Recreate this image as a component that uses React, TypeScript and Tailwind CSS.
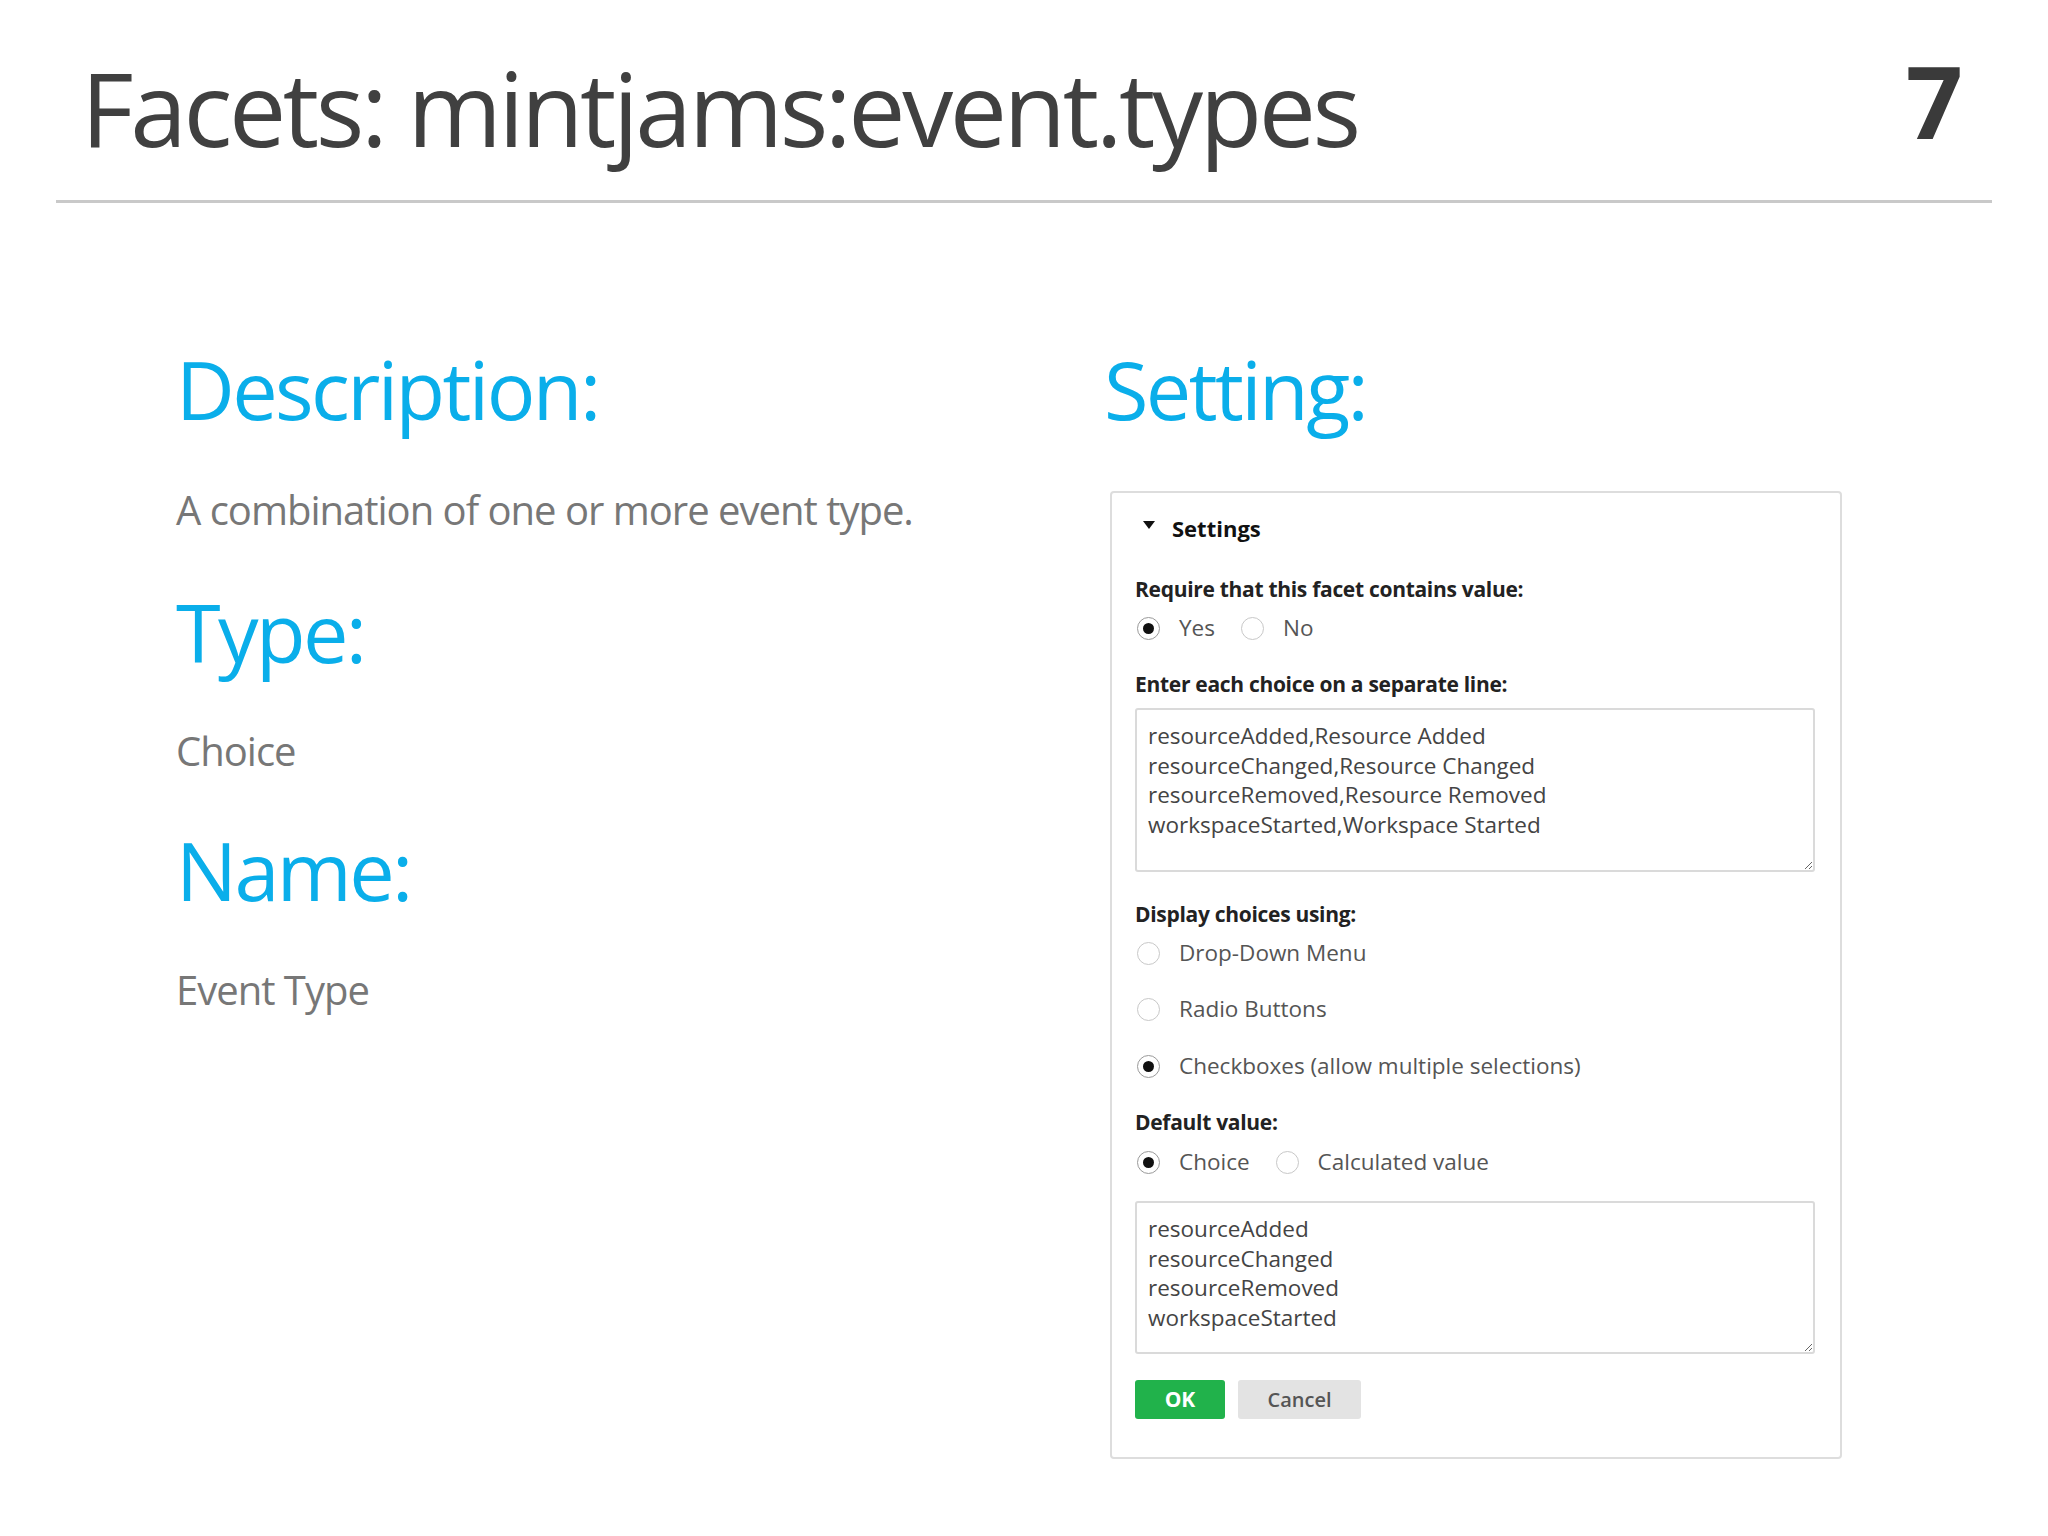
import React from "react";

const font = { fontFamily: '"Open Sans", "Noto Sans", sans-serif' };

function Radio({ checked }: { checked?: boolean }) {
    return (
        <span
            className={
                "flex h-[23px] w-[23px] shrink-0 items-center justify-center rounded-full border-[1.5px] bg-white " +
                (checked ? "border-[#9a9a9a]" : "border-[#c8c8c8]")
            }
        >
            {checked && <span className="h-[11px] w-[11px] rounded-full bg-[#111]" />}
        </span>
    );
}

function Option({ label, checked, className = "" }: { label: string; checked?: boolean; className?: string }) {
    return (
        <div className={"flex h-[36px] items-center " + className}>
            <Radio checked={checked} />
            <span className="ml-[19px] text-[22.5px] text-[#555]">{label}</span>
        </div>
    );
}

function Label({ text, className = "" }: { text: string; className?: string }) {
    return (
        <div className={"flex h-[36px] items-center text-[21px] font-bold text-[#222] tracking-[-0.3px] " + className}>
            {text}
        </div>
    );
}

function Box({ lines, height, className = "" }: { lines: string[]; height: number; className?: string }) {
    return (
        <textarea
            readOnly
            defaultValue={lines.join("\n")}
            style={{ height }}
            className={
                "block w-[680px] rounded-[3px] border-2 border-[#dadada] bg-white pl-[11px] pt-[11px] text-[22.5px] leading-[29.5px] text-[#444] outline-none " +
                className
            }
        />
    );
}

export default function App() {
    return (
        <div className="h-[1536px] w-[2048px] overflow-hidden bg-white" style={font}>
            <div className="mx-[56px] flex items-start justify-between border-b-[3px] border-[#c9c9c9] pb-[41px] pl-[25px] pr-[29px] pt-[50px]">
                <h1 className="mt-[7px] text-[102px] leading-none tracking-[-3.4px] text-[#404040]">Facets: mintjams:event.types</h1>
                <span className="text-[100px] font-bold leading-none text-[#3a3a3a]">7</span>
            </div>

            <div className="flex pl-[176px] pt-[145px]">
                <div className="w-[928px]">
                    <h2 className="text-[81px] leading-none tracking-[-2.6px] text-[#0aaeea]">Description:</h2>
                    <p className="mt-[61px] text-[40px] leading-none tracking-[-1px] text-[#777]">A combination of one or more event type.</p>
                    <h2 className="mt-[61px] text-[81px] leading-none tracking-[-2.6px] text-[#0aaeea]">Type:</h2>
                    <p className="mt-[59px] text-[40px] leading-none tracking-[-1px] text-[#777]">Choice</p>
                    <h2 className="mt-[58px] text-[81px] leading-none tracking-[-2.6px] text-[#0aaeea]">Name:</h2>
                    <p className="mt-[60px] text-[40px] leading-none tracking-[-1px] text-[#777]">Event Type</p>
                </div>

                <div className="flex-1">
                    <h2 className="text-[81px] leading-none tracking-[-2.6px] text-[#0aaeea]">Setting:</h2>
                    <div className="ml-[6px] mt-[62px] w-[732px] rounded-[4px] border-2 border-[#dddddd] pb-[38px] pl-[23px] pr-[25px] pt-[17px]">
                        <div className="flex h-[36px] items-center">
                            <svg width="12" height="8" viewBox="0 0 12 8" className="ml-[8px] -mt-[6px]">
                                <polygon points="0,0 12,0 6,8" fill="#111" />
                            </svg>
                            <span className="ml-[17px] text-[22px] font-bold text-[#111]">Settings</span>
                        </div>

                        <Label text="Require that this facet contains value:" className="mt-[26px]" />
                        <div className="mt-[2px] flex items-center">
                            <Option label="Yes" checked className="ml-[2px]" />
                            <Option label="No" className="ml-[26px]" />
                        </div>

                        <Label text="Enter each choice on a separate line:" className="mt-[21px]" />
                        <Box
                            className="mt-[5px]"
                            height={164}
                            lines={[
                                "resourceAdded,Resource Added",
                                "resourceChanged,Resource Changed",
                                "resourceRemoved,Resource Removed",
                                "workspaceStarted,Workspace Started",
                            ]}
                        />

                        <Label text="Display choices using:" className="mt-[25px]" />
                        <Option label="Drop-Down Menu" className="ml-[2px] mt-[2px]" />
                        <Option label="Radio Buttons" className="ml-[2px] mt-[20px]" />
                        <Option label="Checkboxes (allow multiple selections)" checked className="ml-[2px] mt-[21px]" />

                        <Label text="Default value:" className="mt-[21px]" />
                        <div className="mt-[3px] flex items-center">
                            <Option label="Choice" checked className="ml-[2px]" />
                            <Option label="Calculated value" className="ml-[26px]" />
                        </div>

                        <Box
                            className="mt-[21px]"
                            height={153}
                            lines={["resourceAdded", "resourceChanged", "resourceRemoved", "workspaceStarted"]}
                        />

                        <div className="mt-[26px] flex gap-[13px]">
                            <button className="h-[39px] w-[90px] rounded-[3px] bg-[#21b24b] text-[21px] font-bold text-white">OK</button>
                            <button className="h-[39px] w-[123px] rounded-[3px] bg-[#e3e3e3] text-[20px] font-semibold text-[#555]">Cancel</button>
                        </div>
                    </div>
                </div>
            </div>
        </div>
    );
}
